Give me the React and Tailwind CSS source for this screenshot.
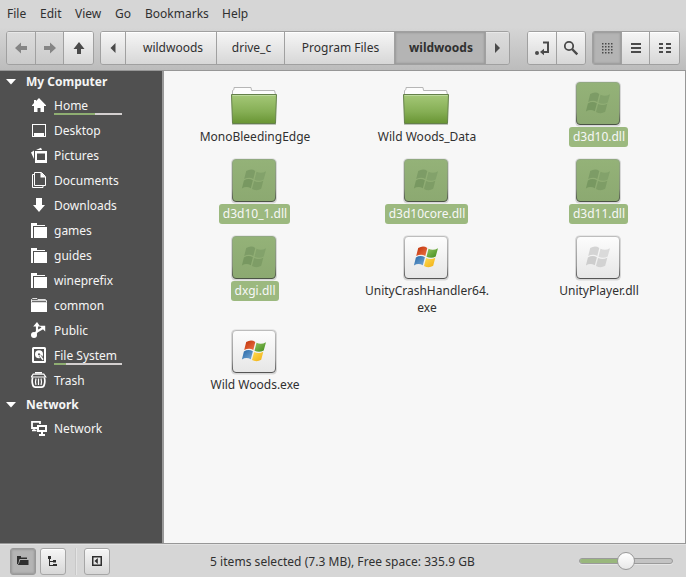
import React from "react";

const FONT = "font-['Noto_Sans','Open_Sans',sans-serif]";

const SIDE_ICONS = {
  home: <path d="M8 1 L15 8.2 V9 H13 V15 H9.5 V11 H6.5 V15 H3 V9 H1 V8.2 L3 6 V3 H5 V4 Z" />,
  desktop: (
    <>
      <path d="M1 2H15V15H1Z M2 3V14H14V3Z" fillRule="evenodd" shapeRendering="crispEdges" />
      <path d="M3 11H13V14H3Z" />
    </>
  ),
  pictures: (
    <>
      <path d="M4 4H16V16H4Z M6 6.5V13H14V6.5Z" fillRule="evenodd" />
      <path d="M0 5.5 L3 3.5 V12 Z M5 3 L10 .8 L11 3 Z" />
    </>
  ),
  documents: (
    <>
      <path d="M3.5 .5H10.5L14.5 4.5V13.5H3.5Z" fill="none" stroke="#fff" />
      <path d="M9.5 0L15 5.5H9.5Z" />
      <path d="M3.5 2.5H1.5V15.5H12V13.5" fill="none" stroke="#fff" />
    </>
  ),
  downloads: <path d="M5 1H11V8H14L8 15L2 8H5Z" />,
  folder: (
    <>
      <path d="M0 1H6V3H14V4H2V16H0Z" shapeRendering="crispEdges" />
      <path d="M3 5H16V16H3Z" shapeRendering="crispEdges" />
    </>
  ),
  common: (
    <>
      <path d="M0 5.2H16V15H0Z" />
      <path d="M.5 5V2.6L1.5 1.6H6L7 2.6H14.5L15.5 3.6V5M1 3.7H15" fill="none" stroke="#fff" strokeWidth=".9" />
    </>
  ),
  public: (
    <>
      <circle cx="3" cy="13" r="3" />
      <path d="M4 12L6 9.5V3M6 9.5L12 6" fill="none" stroke="#fff" strokeWidth="2.2" />
      <path d="M2.2 4.5L6 0L9.2 4.5ZM8.5 3.8H14.2V9.4Z" />
    </>
  ),
  disk: (
    <>
      <path d="M2.5 0H13.5Q15 0 15 1.5V14.5Q15 16 13.5 16H2.5Q1 16 1 14.5V1.5Q1 0 2.5 0ZM3 2V14H13V2Z" fillRule="evenodd" />
      <circle cx="8" cy="7.2" r="4" />
      <circle cx="8" cy="7.2" r="1" fill="#505050" />
      <path d="M8.7 8.2L11.7 12.2" stroke="#505050" strokeWidth="2.6" />
      <path d="M8.7 8.2L12 12.7" stroke="#fff" strokeWidth="1.5" />
    </>
  ),
  trash: (
    <g fill="none" stroke="#fff">
      <path d="M4 .8H11" strokeWidth="1.6" />
      <path d="M2.2 2.2H12.8L14.7 5H.3Z" strokeWidth="1.2" />
      <path d="M1.7 5.5Q.6 9 1.7 12.5Q2.2 15.1 4.5 15.1H10.5Q12.8 15.1 13.3 12.5Q14.4 9 13.3 5.5" strokeWidth="1.7" />
      <path d="M5 6.5Q4 9.7 5 13M7.5 6.5V13M10 6.5Q11 9.7 10 13" strokeWidth="1.2" />
    </g>
  ),
  network: (
    <>
      <path d="M7 8H1V1.8H9V4" fill="none" stroke="#fff" strokeWidth="1.8" />
      <path d="M3 8V11M1 10.5H5.5" fill="none" stroke="#fff" strokeWidth="1.4" />
      <path d="M6 5H16V12H6ZM8 7V10H14V7Z" fillRule="evenodd" />
      <path d="M10 12H12V14H14V16H8V14H10Z" />
    </>
  ),
};

const PLACES = [
  { icon: "home", label: "Home", usage: "w-[41px]" },
  { icon: "desktop", label: "Desktop" },
  { icon: "pictures", label: "Pictures" },
  { icon: "documents", label: "Documents" },
  { icon: "downloads", label: "Downloads" },
  { icon: "folder", label: "games" },
  { icon: "folder", label: "guides" },
  { icon: "folder", label: "wineprefix" },
  { icon: "common", label: "common" },
  { icon: "public", label: "Public" },
  { icon: "disk", label: "File System", usage: "w-[12px]" },
  { icon: "trash", label: "Trash" },
];

const FILES = [
  { kind: "dir", label: "MonoBleedingEdge" },
  { kind: "dir", label: "Wild Woods_Data" },
  { kind: "dll", label: "d3d10.dll", selected: true },
  { kind: "dll", label: "d3d10_1.dll", selected: true },
  { kind: "dll", label: "d3d10core.dll", selected: true },
  { kind: "dll", label: "d3d11.dll", selected: true },
  { kind: "dll", label: "dxgi.dll", selected: true },
  { kind: "exe", label: "UnityCrashHandler64.", second: "exe" },
  { kind: "dll", label: "UnityPlayer.dll" },
  { kind: "exe", label: "Wild Woods.exe" },
];

function Place({ icon, label, usage }) {
  return (
    <div className="flex h-[25px] items-start pl-[31px]">
      <svg className="mt-1 shrink-0" width="16" height="16" viewBox="0 0 16 16" fill="#fff">
        {SIDE_ICONS[icon]}
      </svg>
      <div className="ml-[7px] flex w-[68px] flex-col whitespace-nowrap">
        <span className="h-5 leading-[25px]">{label}</span>
        {usage && (
          <div className="h-[2px] bg-[#d4d0d0]">
            <div className={`h-[2px] bg-[#8fae72] ${usage}`} />
          </div>
        )}
      </div>
    </div>
  );
}

function Heading({ children }) {
  return (
    <div className="flex h-6 items-center pl-[6px] font-bold">
      <svg width="10" height="6" viewBox="0 0 10 6" fill="#fff">
        <path d="M0 0H10L5 5.5Z" />
      </svg>
      <span className="ml-[10px]">{children}</span>
    </div>
  );
}

function WindowsFlag({ colors }) {
  return (
    <>
      <path d="M14.2 12.6Q19 9.6 23.3 12.4L21.3 20.4Q17 18 12.2 20.6Z" fill={colors[0]} />
      <path d="M24.5 13.2Q29 15.6 34 12.8L31.7 21Q27.4 23.4 22.5 21.2Z" fill={colors[1]} />
      <path d="M11.9 21.9Q16.5 19.2 20.9 21.7L18.8 29.8Q14.4 27.4 9.9 29.9Z" fill={colors[2]} />
      <path d="M22.1 22.5Q26.7 24.8 31.3 22.3L29.2 30.3Q24.8 33 20 30.5Z" fill={colors[3]} />
    </>
  );
}

function FileIcon({ kind, selected }) {
  if (kind === "dir") {
    return (
      <svg className="mr-[2px] block" width="48" height="48" viewBox="0 0 48 48">
        <defs>
          <linearGradient id="dir" x2="0" y2="1">
            <stop offset="0" stopColor="#a5c878" />
            <stop offset=".6" stopColor="#85ae54" />
            <stop offset="1" stopColor="#689433" />
          </linearGradient>
        </defs>
        <path d="M3.5 15.5V11.5L5 10.5V8.5H22L22.5 11.5H45.5L46.5 15.5Z" fill="#fdfdfd" stroke="#b6b6b6" />
        <path d="M2.5 15.5H47.5L46.5 44.5H3.5Z" fill="url(#dir)" stroke="#64804a" />
        <path d="M3.5 16.5H46.5" stroke="#bdd99d" />
        <path d="M3 45.5H47" stroke="#8d9788" opacity=".55" />
      </svg>
    );
  }
  const flag = selected
    ? ["#7d9c66", "#83a26b", "#789861", "#7e9d66"]
    : kind === "exe"
      ? ["url(#red)", "url(#green)", "url(#blue)", "url(#gold)"]
      : ["#d4d4d4", "#dadada", "#cdcdcd", "#d2d2d2"];
  return (
    <svg className="mr-[2px] block" width="48" height="48" viewBox="0 0 48 48">
      <defs>
        <linearGradient id="paper" x2="0" y2="1"><stop stopColor="#fdfdfd" /><stop offset="1" stopColor="#e6e6e6" /></linearGradient>
        <linearGradient id="picked" x2="0" y2="1"><stop stopColor="#94b278" /><stop offset="1" stopColor="#8ca971" /></linearGradient>
        <linearGradient id="edge" x2="0" y2="1"><stop stopColor="#bdbdbd" /><stop offset=".7" stopColor="#999" /><stop offset="1" stopColor="#555" /></linearGradient>
        <linearGradient id="edgePicked" x2="0" y2="1"><stop stopColor="#91a981" /><stop offset=".7" stopColor="#849078" /><stop offset="1" stopColor="#4b5445" /></linearGradient>
        <linearGradient id="red" x2="1" y2="1"><stop stopColor="#bd3009" /><stop offset="1" stopColor="#ef7445" /></linearGradient>
        <linearGradient id="green" x2="1" y2="1"><stop stopColor="#94c563" /><stop offset="1" stopColor="#3f8b19" /></linearGradient>
        <linearGradient id="blue" x2="1" y2="1"><stop stopColor="#2465a5" /><stop offset="1" stopColor="#77a9d5" /></linearGradient>
        <linearGradient id="gold" x2="1" y2="1"><stop stopColor="#ffdc53" /><stop offset="1" stopColor="#f0ae13" /></linearGradient>
      </defs>
      <rect x="2" y="2.5" width="46" height="45" rx="4.5" fill="#777" opacity=".25" />
      <rect x="3.5" y="3.5" width="43" height="42" rx="3.5" fill={selected ? "url(#picked)" : "url(#paper)"} stroke={selected ? "url(#edgePicked)" : "url(#edge)"} />
      <g transform="translate(3 2.5)"><WindowsFlag colors={flag} /></g>
    </svg>
  );
}

function FileItem({ kind, label, second, selected }) {
  return (
    <div className={`flex flex-col items-center ${second ? "h-[94px]" : "h-[77px]"}`}>
      <FileIcon kind={kind} selected={selected} />
      <div
        className={`ml-px rounded-[3px] pr-[3px] pl-1 text-center leading-[17px] whitespace-nowrap ${
          selected ? "bg-[#9cb97f] pt-px pb-[2px] text-[#f7f7f7]" : "pt-px text-[#303030]"
        }`}
      >
        <div>{label}</div>
        {second && <div>{second}</div>}
      </div>
    </div>
  );
}

const RAISED = "bg-linear-to-b from-[#f6f6f6] to-[#d7d7d7] shadow-[inset_0_1px_0_#fff]";
const PRESSED = "bg-[#b4b4b4] shadow-[inset_0_0_2px_1px_#999]";
const FLAT = "bg-linear-to-b from-[#dcdcdc] to-[#cbcbcb] shadow-[inset_0_1px_0_#e8e8e8]";

function Group({ className = "", children }) {
  return (
    <div className={`flex h-[34px] divide-x divide-[#a0a0a0] overflow-hidden rounded-[3px] border border-[#a0a0a0] ${className}`}>
      {children}
    </div>
  );
}

function Button({ tone = RAISED, className = "w-[29px]", children }) {
  return <div className={`flex items-center justify-center ${tone} ${className}`}>{children}</div>;
}

function Glyph({ color = "#4a4a4a", children }) {
  return (
    <svg width="16" height="16" viewBox="0 0 16 16" fill={color} className="shrink-0">
      {children}
    </svg>
  );
}

export default function App() {
  return (
    <div className={`flex h-[577px] w-[686px] flex-col overflow-hidden bg-[#d6d6d6] text-[12px] text-[#303030] ${FONT}`}>
      <div className="flex h-[27px] shrink-0 items-center pl-[7px]">
        <span className="w-[33px]">File</span>
        <span className="w-[35px]">Edit</span>
        <span className="w-10">View</span>
        <span className="w-[30px]">Go</span>
        <span className="w-[77px]">Bookmarks</span>
        <span>Help</span>
      </div>

      <div className="flex h-11 shrink-0 items-start border-b border-[#979797] bg-linear-to-b from-[#d6d6d6] to-[#bcbcbc] pt-1 pl-[6px]">
        <Group className="w-[88px]">
          <Button tone={FLAT}>
            <Glyph color="#858585"><path d="M2 8L8 2.5V6H14V10H8V13.5Z" /></Glyph>
          </Button>
          <Button tone={FLAT}>
            <Glyph color="#858585"><path d="M14 8L8 2.5V6H2V10H8V13.5Z" /></Glyph>
          </Button>
          <Button>
            <Glyph><path d="M8 2L13.5 9H10V14H6V9H2.5Z" /></Glyph>
          </Button>
        </Group>
        <Group className="ml-[6px] w-[410px]">
          <Button className="w-[25px]">
            <Glyph><path d="M10.5 3V13L5.5 8Z" /></Glyph>
          </Button>
          <Button className="w-[91px] pl-[4px]">wildwoods</Button>
          <Button className="w-[68px] pl-[2px]">drive_c</Button>
          <Button className="w-[110px] pl-[2px]">Program Files</Button>
          <Button tone={PRESSED} className="w-[91px] pl-[2px] font-bold">wildwoods</Button>
          <Button tone={FLAT} className="flex-1">
            <Glyph><path d="M5 3V13L10 8Z" /></Glyph>
          </Button>
        </Group>
        <Group className="ml-[17px] w-[59px]">
          <Button>
            <Glyph>
              <circle cx="3" cy="13" r="2" />
              <path d="M9 2.5H14V12H8" fill="none" stroke="#4a4a4a" strokeWidth="2" />
              <path d="M6 12L10 8.8V15.2Z" />
            </Glyph>
          </Button>
          <Button>
            <Glyph>
              <circle cx="6" cy="6" r="4.2" fill="none" stroke="#4a4a4a" strokeWidth="1.8" />
              <path d="M9 9L14.3 14.3" stroke="#4a4a4a" strokeWidth="2.4" />
            </Glyph>
          </Button>
        </Group>
        <Group className="ml-[6px] w-[88px]">
          <Button tone={PRESSED}>
            <Glyph>
              {[3, 6, 9, 12].map((y) => [3, 6, 9, 12].map((x) => <path key={`${x}-${y}`} d={`M${x} ${y}h1.5v1.5h-1.5z`} />))}
            </Glyph>
          </Button>
          <Button>
            <Glyph><path d="M3 3H13V5H3ZM3 7H13V9H3ZM3 11H13V13H3Z" /></Glyph>
          </Button>
          <Button>
            <Glyph><path d="M2 3H6V5H2ZM9 3H14V5H9ZM2 7H6V9H2ZM9 7H14V9H9ZM2 11H6V13H2ZM9 11H14V13H9Z" /></Glyph>
          </Button>
        </Group>
      </div>

      <div className="flex h-[473px] shrink-0 border-b border-[#979797]">
        <div className="w-[162px] shrink-0 bg-[#505050] text-[#f5f5f5]">
          <div className="-mt-px h-[23px]"><Heading>My Computer</Heading></div>
          {PLACES.map((p) => <Place key={p.label} {...p} />)}
          <Heading>Network</Heading>
          <div className="-mt-px"><Place icon="network" label="Network" /></div>
        </div>
        <div className="flex-1 border-r border-l-2 border-r-[#979797] border-l-[#999] bg-[#f7f7f7] pt-2 pl-1">
          <div className="grid w-[516px] grid-cols-3 items-start">
            {FILES.map((f) => <FileItem key={f.label} {...f} />)}
          </div>
        </div>
      </div>

      <div className="flex flex-1 items-center border-t border-[#e2e2e2] pl-[10px]">
        <div className={`flex h-[27px] w-[26px] items-center justify-center rounded-[3px] border border-[#999] ${PRESSED}`}>
          <Glyph color="#2e2e2e">
            <path d="M2 3H6V4.5H12V6H4.5L3.2 11H2Z" />
            <path d="M5.2 7H13.5V12H2.8V11.5L3.8 11Z" />
          </Glyph>
        </div>
        <div className={`ml-1 flex h-[27px] w-[26px] items-center justify-center rounded-[3px] border border-[#a6a6a6] ${RAISED}`}>
          <Glyph color="#2e2e2e">
            <path d="M3 3H6V6H3ZM4 6H5V12H8V13H4ZM5 8H8V9H5ZM8 7H11V9.5H8ZM8 11H12V13H8Z" />
          </Glyph>
        </div>
        <div className="ml-[9px] h-[27px] w-px bg-[#c8c8c8] shadow-[1px_0_0_#e4e4e4]" />
        <div className={`ml-[8px] flex h-[27px] w-[26px] items-center justify-center rounded-[3px] border border-[#a6a6a6] ${RAISED}`}>
          <Glyph color="#2e2e2e">
            <path d="M3 3H13V13H3ZM4.5 4.5V11.5H11.5V4.5Z" fillRule="evenodd" />
            <path d="M5.5 8L8.8 5V11Z" />
          </Glyph>
        </div>
        <span className="ml-[100px] w-[369px] pt-px tracking-[0.04px] whitespace-nowrap">5 items selected (7.3 MB), Free space: 335.9 GB</span>
        <div className="flex h-[6px] w-[94px] items-center rounded-full border border-[#9a9a9a] bg-[#c3c3c3] shadow-[0_1px_0_#e5e5e5]">
          <div className="h-1 w-[40px] shrink-0 rounded-l-full bg-[#99b77c]" />
          <div className="-ml-[3px] h-[18px] w-[18px] shrink-0 rounded-full border border-[#999] bg-linear-to-b from-[#fff] to-[#e8e8e8]" />
        </div>
      </div>
    </div>
  );
}
